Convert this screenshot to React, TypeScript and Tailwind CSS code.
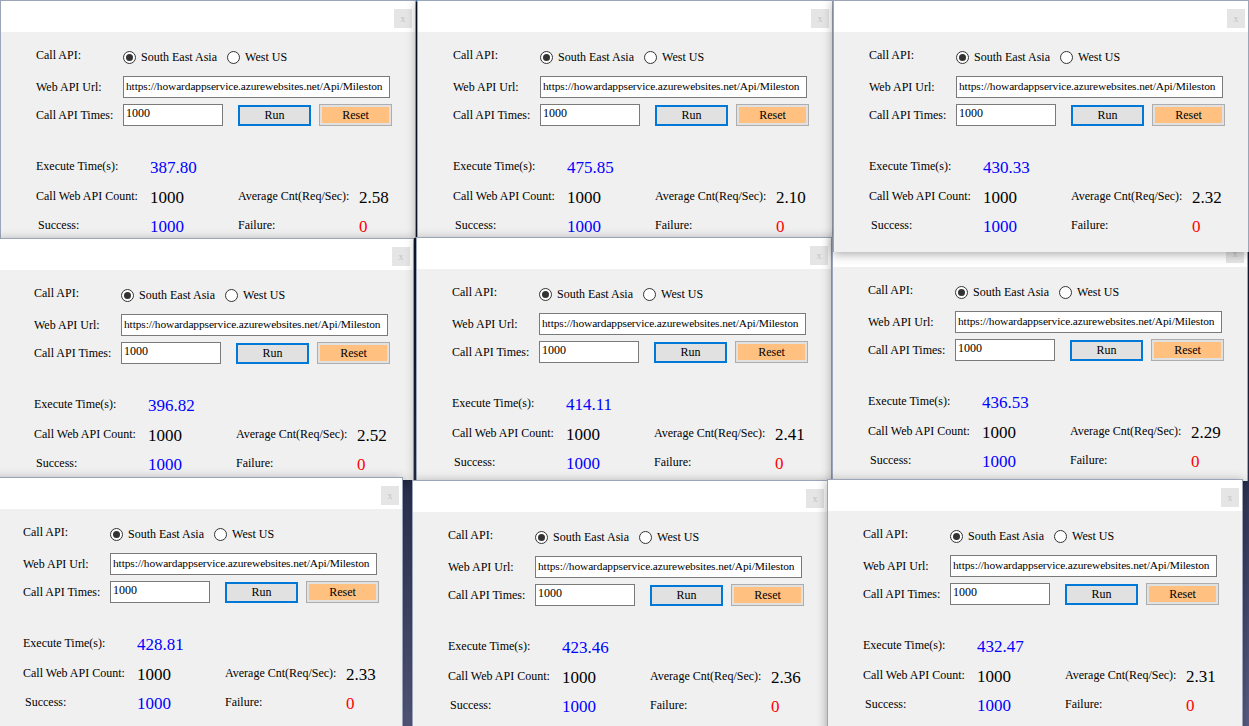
import React from "react";

type Win = {
  left: number;
  top: number;
  height: number;
  exec: string;
  avg: string;
  z: number;
};

const windows: Win[] = [
  { left: 0, top: 0, height: 238, exec: "387.80", avg: "2.58", z: 1 },
  { left: 417, top: 0, height: 238, exec: "475.85", avg: "2.10", z: 1 },
  { left: 833, top: 0, height: 252, exec: "430.33", avg: "2.32", z: 5 },
  { left: -2, top: 238, height: 242, exec: "396.82", avg: "2.52", z: 2 },
  { left: 416, top: 237, height: 244, exec: "414.11", avg: "2.41", z: 2 },
  { left: 832, top: 235, height: 246, exec: "436.53", avg: "2.29", z: 2 },
  { left: -13, top: 477, height: 260, exec: "428.81", avg: "2.33", z: 3 },
  { left: 412, top: 480, height: 260, exec: "423.46", avg: "2.36", z: 3 },
  { left: 827, top: 479, height: 260, exec: "432.47", avg: "2.31", z: 3 },
];

function Radio({ checked, label }: { checked?: boolean; label: string }) {
  return (
    <span className="flex items-center gap-[5px]">
      <span className="flex h-[13px] w-[13px] items-center justify-center rounded-full border border-[#333333] bg-white">
        {checked && <span className="h-[7px] w-[7px] rounded-full bg-[#333333]" />}
      </span>
      <span>{label}</span>
    </span>
  );
}

function StatRow({
  label,
  value,
  valueClass,
  label2,
  value2,
  value2Class,
}: {
  label: string;
  value: string;
  valueClass: string;
  label2?: string;
  value2?: string;
  value2Class?: string;
}) {
  return (
    <div className="flex h-[20px] items-center">
      <span className="w-[114px] -translate-y-[1px]">{label}</span>
      <span className={`w-[88px] text-[17px] leading-none ${valueClass}`}>{value}</span>
      {label2 && <span className="w-[121px] -translate-y-[1px]">{label2}</span>}
      {value2 && <span className={`text-[17px] leading-none ${value2Class}`}>{value2}</span>}
    </div>
  );
}

function ApiWindow({ w }: { w: Win }) {
  return (
    <div
      className="absolute flex w-[416px] flex-col border-x border-t border-[#9aa6b8] shadow-[0_2px_10px_rgba(0,0,0,0.35)]"
      style={{ left: w.left, top: w.top, height: w.height, zIndex: w.z }}
    >
      <div className="relative h-[31px] bg-white">
        <div className="absolute right-[3px] top-[8px] flex h-[19px] w-[18px] items-center justify-center bg-[#e5e5e5] text-[10px] text-[#c4c4c4]">
          x
        </div>
      </div>
      <div className="flex-1 bg-[#f0f0f0] pl-[35px] pt-[17px] text-[12px] text-black">
        <div className="flex h-[16px] items-center">
          <span className="w-[87px] -translate-y-[2px]">Call API:</span>
          <div className="flex items-center gap-[10px]">
            <Radio checked label="South East Asia" />
            <Radio label="West US" />
          </div>
        </div>
        <div className="mt-[11px] flex h-[22px] items-center">
          <span className="w-[87px]">Web API Url:</span>
          <div className="h-[22px] w-[267px] overflow-hidden whitespace-nowrap border border-[#7a7a7a] bg-white pl-[2px] text-[11.4px] leading-[19px] tracking-[-0.1px]">
            https://howardappservice.azurewebsites.net/Api/Mileston
          </div>
        </div>
        <div className="mt-[6px] flex h-[22px] items-center">
          <span className="w-[87px]">Call API Times:</span>
          <div className="h-[22px] w-[100px] border border-[#7a7a7a] bg-white pl-[2px] leading-[16px]">1000</div>
          <div className="ml-[15px] flex h-[21px] w-[73px] items-center justify-center border-2 border-[#0078d7] bg-[#e1e1e1]">
            Run
          </div>
          <div className="ml-[8px] h-[22px] w-[73px] border border-[#adadad] bg-[#e1e1e1] p-[2px]">
            <div className="flex h-full items-center justify-center bg-[#ffc080]">Reset</div>
          </div>
        </div>
        <div className="mt-[31px]">
          <StatRow label="Execute Time(s):" value={w.exec} valueClass="text-[#0000ff]" />
        </div>
        <div className="mt-[10px]">
          <StatRow
            label="Call Web API Count:"
            value="1000"
            valueClass="text-black"
            label2="Average Cnt(Req/Sec):"
            value2={w.avg}
            value2Class="text-black"
          />
        </div>
        <div className="mt-[9px] pl-[2px]">
          <StatRow
            label="Success:"
            value="1000"
            valueClass="-ml-[2px] text-[#0000ff]"
            label2="Failure:"
            value2="0"
            value2Class="text-[#ff0000]"
          />
        </div>
      </div>
    </div>
  );
}

export default function App() {
  return (
    <div
      className="relative h-[726px] w-[1249px] overflow-hidden bg-gradient-to-b from-[#0a1226] via-[#1a2140] to-[#5c6088]"
      style={{ fontFamily: '"Liberation Serif", "Noto Sans CJK TC", serif' }}
    >
      <div className="absolute left-0 top-0 h-[2px] w-full bg-[#4a78c0]" />
      {windows.map((w, i) => (
        <ApiWindow key={i} w={w} />
      ))}
    </div>
  );
}
